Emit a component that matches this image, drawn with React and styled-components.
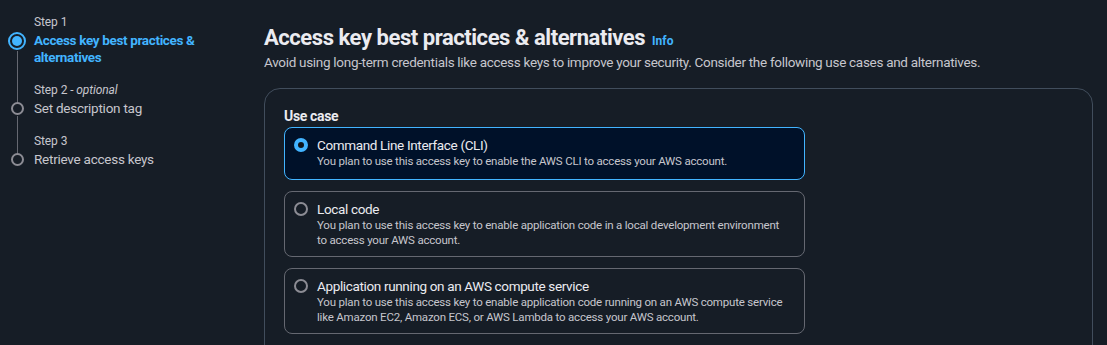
import React, { useState } from 'react';
import styled, { createGlobalStyle } from 'styled-components';

const Global = createGlobalStyle`
    body {
        margin: 0;
        background: #161d26;
        font-family: Roboto, "Noto Sans", Arial, sans-serif;
        color: #c6c6cd;
    }
`;

const Page = styled.div`
    display: flex;
    height: 345px;
    overflow: hidden;
    background: #161d26;
`;

// 왼쪽 스텝 네비
const Nav = styled.ol`
    list-style: none;
    margin: 0;
    padding: 14px 0 0 5px;
    width: 254px;
    flex-shrink: 0;
    box-sizing: border-box;
`;

const Step = styled.li`
    display: grid;
    grid-template-columns: 24px 1fr;
    column-gap: 5px;
`;

const Rail = styled.div`
    display: flex;
    flex-direction: column;
    align-items: center;
    padding-top: ${props => props.active ? '18px' : '20px'};
`;

const Dot = styled.span`
    width: ${props => props.active ? '18px' : '13px'};
    height: ${props => props.active ? '18px' : '13px'};
    box-sizing: border-box;
    border-radius: 50%;
    border: 2px solid ${props => props.active ? '#42b4ff' : '#8c8c94'};
    display: flex;
    align-items: center;
    justify-content: center;
    flex-shrink: 0;
    &::after {
        content: '';
        display: ${props => props.active ? 'block' : 'none'};
        width: 10px;
        height: 10px;
        border-radius: 50%;
        background: #42b4ff;
    }
`;

const Line = styled.span`
    width: 1px;
    flex: 1;
    background: #656871;
    margin-top: 1px;
    margin-bottom: -21px;
`;

const StepBody = styled.div`
    padding-bottom: ${props => props.last ? '0' : '16px'};
`;

const StepLabel = styled.div`
    font-size: 12px;
    line-height: 16px;
    letter-spacing: -0.1px;
    color: #c6c6cd;
    i { font-style: italic; }
`;

const StepTitle = styled.div`
    font-size: 13.5px;
    line-height: 17px;
    margin-top: 2px;
    letter-spacing: ${props => props.active ? '-0.35px' : '-0.25px'};
    font-weight: ${props => props.active ? 700 : 400};
    color: ${props => props.active ? '#42b4ff' : '#c6c6cd'};
`;

const Main = styled.div`
    flex: 1;
    padding: 24px 14px 0 10px;
`;

const Title = styled.h1`
    margin: 0;
    display: flex;
    align-items: baseline;
    gap: 7px;
    height: 28px;
    font-size: 22px;
    line-height: 28px;
    font-weight: 700;
    letter-spacing: -0.45px;
    color: #ebebf0;
`;

const Info = styled.a`
    font-size: 12px;
    line-height: 1;
    font-weight: 700;
    letter-spacing: 0;
    color: #42b4ff;
`;

const Desc = styled.p`
    margin: 0;
    font-size: 13.5px;
    line-height: 20px;
    letter-spacing: -0.3px;
    color: #c6c6cd;
`;

const Container = styled.div`
    margin-top: 16px;
    border: 1px solid #414d5c;
    border-radius: 16px;
    padding: 18px 19px 20px;
    height: 300px;
`;

const Label = styled.div`
    font-size: 14px;
    font-weight: 700;
    line-height: 18px;
    letter-spacing: -0.35px;
    color: #ebebf0;
`;

const Tiles = styled.div`
    display: flex;
    flex-direction: column;
    gap: 11px;
    margin-top: 2px;
    width: 521px;
`;

const Tile = styled.label`
    display: flex;
    gap: 9px;
    padding: 8px 17px 8px 9px;
    border-radius: 8px;
    border: 1px solid ${props => props.checked ? '#42b4ff' : '#656871'};
    background: ${props => props.checked ? '#001129' : 'transparent'};
    cursor: pointer;
    min-height: 35px;
`;

const Radio = styled.span`
    margin-top: 2px;
    width: 14px;
    height: 14px;
    box-sizing: border-box;
    border-radius: 50%;
    border: ${props => props.checked ? '4px solid #42b4ff' : '2px solid #8c8c94'};
    background: ${props => props.checked ? '#0f141a' : 'transparent'};
    flex-shrink: 0;
`;

const TileText = styled.div`
    display: flex;
    flex-direction: column;
`;

const TileTitle = styled.span`
    font-size: 13.5px;
    line-height: 18px;
    letter-spacing: -0.35px;
    color: #ebebf0;
`;

const TileDesc = styled.span`
    font-size: 11.5px;
    line-height: 15px;
    letter-spacing: -0.2px;
    color: #c6c6cd;
`;

const steps = [
    { label: 'Step 1', title: 'Access key best practices & alternatives' },
    { label: 'Step 2', optional: true, title: 'Set description tag' },
    { label: 'Step 3', title: 'Retrieve access keys' },
];

const options = [
    { title: 'Command Line Interface (CLI)', desc: 'You plan to use this access key to enable the AWS CLI to access your AWS account.' },
    { title: 'Local code', desc: 'You plan to use this access key to enable application code in a local development environment to access your AWS account.' },
    { title: 'Application running on an AWS compute service', desc: 'You plan to use this access key to enable application code running on an AWS compute service like Amazon EC2, Amazon ECS, or AWS Lambda to access your AWS account.' },
];

const App = () => {
    const [selected, setSelected] = useState(0);

    return (
        <Page>
            <Global />
            <Nav>
                {steps.map((s, idx) => (
                    <Step key={idx}>
                        <Rail active={idx === 0}>
                            <Dot active={idx === 0} />
                            {idx < steps.length - 1 && <Line />}
                        </Rail>
                        <StepBody last={idx === steps.length - 1}>
                            <StepLabel>{s.label}{s.optional && <> - <i>optional</i></>}</StepLabel>
                            <StepTitle active={idx === 0}>
                                {idx === 0 ? <>Access key best practices &amp;<br />alternatives</> : s.title}
                            </StepTitle>
                        </StepBody>
                    </Step>
                ))}
            </Nav>
            <Main>
                <Title>Access key best practices &amp; alternatives <Info>Info</Info></Title>
                <Desc>Avoid using long-term credentials like access keys to improve your security. Consider the following use cases and alternatives.</Desc>
                <Container>
                    <Label>Use case</Label>
                    <Tiles>
                        {options.map((o, idx) => (
                            <Tile key={idx} checked={selected === idx} onClick={() => setSelected(idx)}>
                                <Radio checked={selected === idx} />
                                <TileText>
                                    <TileTitle>{o.title}</TileTitle>
                                    <TileDesc>{o.desc}</TileDesc>
                                </TileText>
                            </Tile>
                        ))}
                    </Tiles>
                </Container>
            </Main>
        </Page>
    );
};

export default App;
